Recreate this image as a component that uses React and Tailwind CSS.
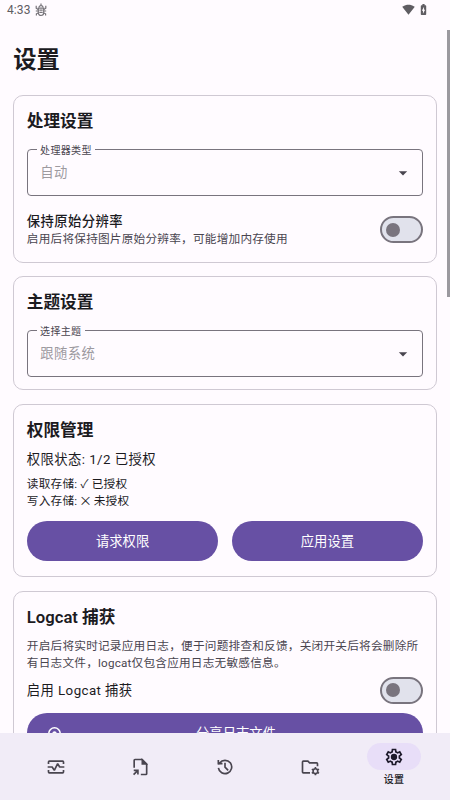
import { MdSignalWifi4Bar, MdBatteryChargingFull, MdArrowDropDown } from 'react-icons/md';

const BugIcon = () => (
    <svg viewBox="0 0 12 14" className="w-3 h-3.5" fill="none" stroke="#77747a" strokeWidth="1.2">
        <path d="M3.3 5.2h5.4v4.6a2.7 2.7 0 0 1-5.4 0z" />
        <path d="M4 4.6a2 2 0 0 1 4 0M4.3 7.2h3.4M4.3 9.4h3.4M1.2 2.8v2.4l2 1.2M10.8 2.8v2.4l-2 1.2M.8 8h2.4M8.8 8h2.4M1.4 12.6v-1.8l1.9-.8M10.6 12.6v-1.8l-1.9-.8M6 2.6V.6" />
    </svg>
);

const VitalsIcon = () => (
    <svg viewBox="0 0 24 24" className="size-5" fill="none" stroke="#49454f" strokeWidth="2">
        <path d="M3 8.5V6a1 1 0 0 1 1-1h16a1 1 0 0 1 1 1v2.5M3 15.5V18a1 1 0 0 0 1 1h16a1 1 0 0 0 1-1v-2.5" />
        <path d="M2 12h5.4l2.6 4 4-8 2.4 4H22" strokeLinejoin="bevel" />
    </svg>
);

const FileIcon = () => (
    <svg viewBox="0 0 24 24" className="size-5" fill="none" stroke="#49454f" strokeWidth="2">
        <path d="M5 13V4a1 1 0 0 1 1-1h8.5L20 8.5V20a1 1 0 0 1-1 1h-6" />
        <path d="M14.5 3v5.5H20z" fill="#49454f" strokeWidth="1.4" />
        <path d="M4.5 16H9.5v5M9.5 16l-5.2 5.2" />
    </svg>
);

const HistoryIcon = () => (
    <svg viewBox="0 0 24 24" className="size-5" fill="none" stroke="#49454f" strokeWidth="2">
        <path d="M4.1 13a8 8 0 1 0 1.5-5.8L4 9M4 3.5V8h5" />
        <path d="M12 7v5.2l3.8 3.8" />
    </svg>
);

const FolderIcon = () => (
    <svg viewBox="0 0 24 24" className="size-5" fill="none" stroke="#49454f" strokeWidth="2">
        <path d="M12 19H4a1 1 0 0 1-1-1V6a1 1 0 0 1 1-1h5.5l2 2H20a1 1 0 0 1 1 1v3" />
        <circle cx="18.5" cy="17" r="2.8" strokeWidth="1.9" />
        <path d="M18.5 12v2M18.5 20v2M14.2 14.5l1.7 1M21.1 18.5l1.7 1M14.2 19.5l1.7-1M21.1 15.5l1.7-1" strokeWidth="1.9" />
    </svg>
);

const SettingsIcon = () => (
    <svg viewBox="0 0 24 24" className="size-5" fill="#1d192b">
        <path d="m9.25 22-.4-3.2q-.325-.125-.612-.3t-.563-.375L4.7 19.375l-2.75-4.75 2.575-1.95Q4.5 12.5 4.5 12.337v-.674q0-.163.025-.338L1.95 9.375l2.75-4.75 2.975 1.25q.275-.2.575-.375t.6-.3l.4-3.2h5.5l.4 3.2q.325.125.613.3t.562.375l2.975-1.25 2.75 4.75-2.575 1.95q.025.175.025.338v.674q0 .163-.05.338l2.575 1.95-2.75 4.75-2.95-1.25q-.275.2-.575.375t-.6.3l-.4 3.2zM11 20h1.975l.35-2.65q.775-.2 1.438-.587t1.212-.938l2.475 1.025.975-1.7-2.15-1.625q.125-.35.175-.737T17.5 12t-.05-.787-.175-.738l2.15-1.625-.975-1.7-2.475 1.05q-.55-.575-1.212-.962t-1.438-.588L13 4h-1.975l-.35 2.65q-.775.2-1.437.588t-1.213.937L5.55 7.15l-.975 1.7 2.15 1.6q-.125.375-.175.75t-.05.8q0 .4.05.775t.175.75l-2.15 1.625.975 1.7 2.475-1.05q.55.575 1.213.963t1.437.587z" />
        <circle cx="12" cy="12" r="3.8" />
    </svg>
);

const Card = ({ title, children }) => (
    <section className="rounded-[10px] border border-[#cfc9d3] px-[12.5px] pt-[14px] pb-[12px]">
        <h2 className="-mb-px text-[16.67px] leading-[23px] font-semibold">{title}</h2>
        {children}
    </section>
);

const SelectField = ({ label, value }) => (
    <div className="relative mt-[17px] flex h-[47px] items-center justify-between rounded-[4px] border border-[#79747e] pr-[9px] pl-[12.5px]">
        <span className="absolute -top-[6.5px] left-[9px] bg-[#fffbff] px-[3.3px] text-[10px] leading-[14px] tracking-[0.33px] text-[#49454f]">{label}</span>
        <span className="text-[13.33px] leading-5 tracking-[0.42px] text-[#9d9a9f]">{value}</span>
        <MdArrowDropDown className="size-5 text-[#49454f]" />
    </div>
);

const Toggle = () => (
    <button className="flex h-[27px] w-[43.5px] shrink-0 items-center rounded-full border-2 border-[#79747e] bg-[#e1e2ec] pl-[4.5px]">
        <span className="size-[13.5px] rounded-full bg-[#79747e]" />
    </button>
);

const tabs = [VitalsIcon, FileIcon, HistoryIcon, FolderIcon];

const App = () => {
    return (
        <div className="relative flex h-screen flex-col overflow-hidden bg-[#fffbff] font-[Roboto,'Noto_Sans_CJK_SC',sans-serif] text-[#1c1b1f]">
            <header className="flex h-5 shrink-0 items-center justify-between pr-[20px] pl-[7px] text-[#5f5d62]">
                <div className="flex items-center gap-[4px]">
                    <span className="text-[12px] leading-5 tracking-[0.1px]">4:33</span>
                    <BugIcon />
                </div>
                <div className="flex items-center gap-[2px] pb-[2px]">
                    <MdSignalWifi4Bar className="size-[13px]" />
                    <MdBatteryChargingFull className="size-[13px]" />
                </div>
            </header>

            <main className="min-h-0 flex-1 overflow-hidden px-[13.3px] pt-[23px]">
                <h1 className="text-[23.33px] leading-[34px] font-semibold">设置</h1>
                <div className="mt-[18px] flex flex-col gap-[13.5px]">
                    <Card title="处理设置">
                        <SelectField label="处理器类型" value="自动" />
                        <div className="mt-[16px] flex items-center justify-between pb-[2px]">
                            <div className="pt-px">
                                <p className="text-[13.33px] leading-[18px] font-medium tracking-[0.42px]">保持原始分辨率</p>
                                <p className="text-[11.67px] leading-[16.67px] tracking-[0.21px] text-[#49454f]">启用后将保持图片原始分辨率，可能增加内存使用</p>
                            </div>
                            <Toggle />
                        </div>
                    </Card>

                    <Card title="主题设置">
                        <SelectField label="选择主题" value="跟随系统" />
                    </Card>

                    <Card title="权限管理">
                        <p className="mt-[9px] text-[13.33px] leading-5 tracking-[0.42px]">权限状态: 1/2 已授权</p>
                        <div className="mt-[6px] text-[11.67px] leading-[17px] tracking-[0.21px]">
                            <p>读取存储: ✓ 已授权</p>
                            <p>
                                写入存储: <span className="-mx-[1.5px] font-['Noto_Sans_CJK_SC'] text-[13px] leading-none">×</span> 未授权
                            </p>
                        </div>
                        <div className="mt-[11.5px] mb-[3px] flex gap-[13.3px] text-[13.33px] text-white">
                            <button className="h-10 flex-1 rounded-full bg-[#6750a4] pt-px">请求权限</button>
                            <button className="h-10 flex-1 rounded-full bg-[#6750a4] pt-px">应用设置</button>
                        </div>
                    </Card>

                    <Card title="Logcat 捕获">
                        <p className="mt-[10.5px] text-[11.67px] leading-[16.67px] tracking-[0.21px] text-[#49454f]">
                            开启后将实时记录应用日志，便于问题排查和反馈，关闭开关后将会删除所有日志文件，logcat仅包含应用日志无敏感信息。
                        </p>
                        <div className="mt-[5px] flex items-center justify-between">
                            <span className="pt-[2px] text-[13.33px] leading-5 tracking-[0.42px]">启用 Logcat 捕获</span>
                            <Toggle />
                        </div>
                        <button className="mt-[9.5px] flex h-10 w-full items-center rounded-full bg-[#6750a4] px-5 pt-px text-[13.33px] text-white">
                            <svg viewBox="0 0 16 16" className="size-4" fill="none" stroke="currentColor" strokeWidth="1.5">
                                <circle cx="7.5" cy="7.5" r="5.7" />
                                <circle cx="7.5" cy="7.5" r="2.2" fill="currentColor" stroke="none" />
                            </svg>
                            <span className="flex-1 pl-1.5 text-center">分享日志文件</span>
                        </button>
                    </Card>
                </div>
            </main>

            <nav className="grid h-[67px] shrink-0 grid-cols-5 bg-[#f1ecf7] px-[13.6px]">
                {tabs.map((Icon, i) => (
                    <button key={i} className="flex items-center justify-center">
                        <Icon />
                    </button>
                ))}
                <button className="flex flex-col items-center pt-[10px]">
                    <span className="flex h-[27px] w-[53.5px] items-center justify-center rounded-full bg-[#e8def8]">
                        <SettingsIcon />
                    </span>
                    <span className="mt-[2.5px] text-[10px] leading-[14px] font-medium tracking-[0.4px]">设置</span>
                </button>
            </nav>

            <div className="absolute top-[30px] right-0 h-[267px] w-[3px] bg-[#9b999f]" />
        </div>
    );
};

export default App;
